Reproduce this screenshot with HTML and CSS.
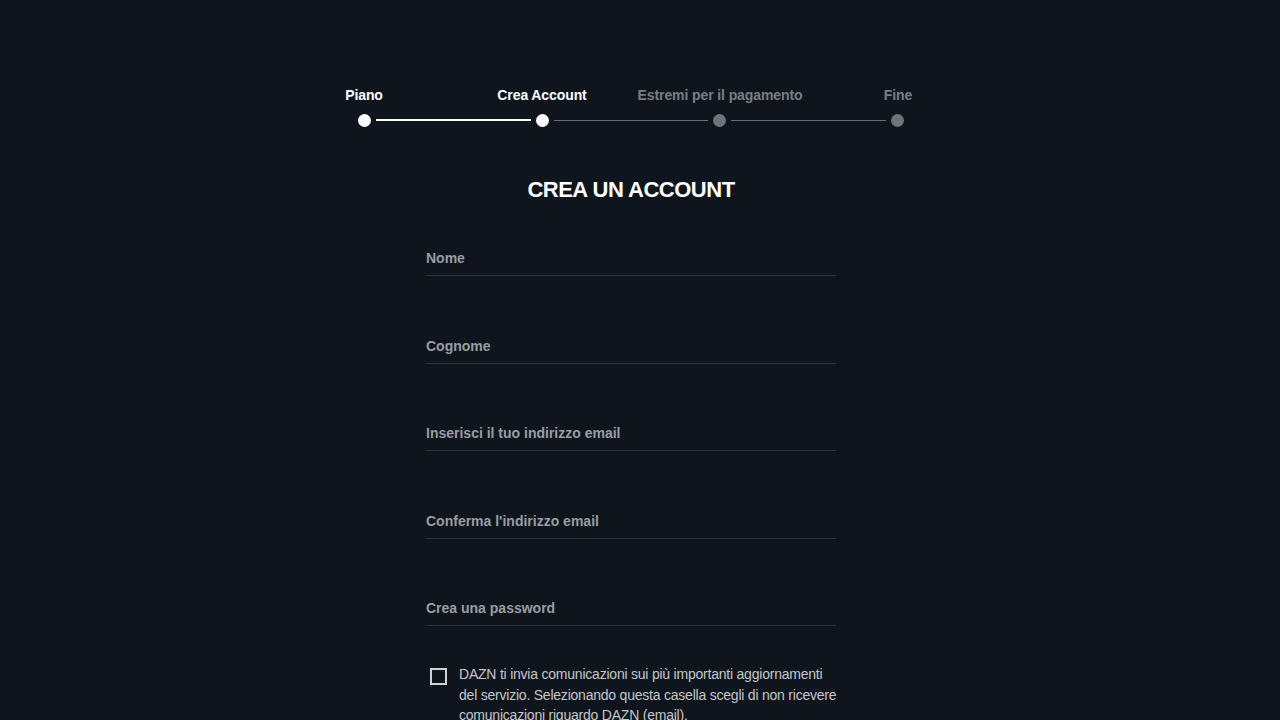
FILE: index.html
```html
<!DOCTYPE html>
<html lang="it">
<head>
<meta charset="utf-8">
<title>DAZN - Crea un account</title>
<link rel="stylesheet" href="styles.css">
</head>
<body>
<main class="page">
  <nav class="stepper">
    <ol class="step-labels">
      <li class="step-label is-done">Piano</li>
      <li class="step-label is-active">Crea Account</li>
      <li class="step-label">Estremi per il pagamento</li>
      <li class="step-label">Fine</li>
    </ol>
    <div class="step-track">
      <span class="dot dot-on"></span>
      <span class="line line-on"></span>
      <span class="dot dot-on"></span>
      <span class="line"></span>
      <span class="dot"></span>
      <span class="line"></span>
      <span class="dot"></span>
    </div>
  </nav>

  <h1 class="title">CREA UN ACCOUNT</h1>

  <form class="form">
    <label class="field"><span class="field-label">Nome</span></label>
    <label class="field"><span class="field-label">Cognome</span></label>
    <label class="field"><span class="field-label">Inserisci il tuo indirizzo email</span></label>
    <label class="field"><span class="field-label">Conferma l'indirizzo email</span></label>
    <label class="field"><span class="field-label">Crea una password</span></label>

    <label class="optout">
      <span class="checkbox"></span>
      <span class="optout-text">DAZN ti invia comunicazioni sui più importanti aggiornamenti del servizio. Selezionando questa casella scegli di non ricevere comunicazioni riguardo DAZN (email).</span>
    </label>
  </form>
</main>
</body>
</html>
```
FILE: styles.css
```css
html, body {
  margin: 0;
  padding: 0;
  background: #0e151c;
  height: 100%;
  overflow: hidden;
}
body {
  font-family: "Liberation Sans", Arial, sans-serif;
  color: #ffffff;
}
.page {
  width: 1262px;
  display: flex;
  flex-direction: column;
  align-items: center;
  padding-top: 86px;
}
.stepper {
  display: flex;
  flex-direction: column;
  align-items: center;
}
.step-labels {
  list-style: none;
  margin: 0;
  padding: 0;
  display: grid;
  grid-template-columns: repeat(4, 178px);
}
.step-label {
  text-align: center;
  white-space: nowrap;
  font-size: 14px;
  font-weight: bold;
  line-height: 18px;
  letter-spacing: -0.1px;
  color: #7a7f85;
}
.step-label.is-done,
.step-label.is-active {
  color: #ffffff;
}
.step-track {
  margin-top: 9.5px;
  width: 546px;
  display: flex;
  align-items: center;
}
.dot {
  width: 13px;
  height: 13px;
  border-radius: 50%;
  background: #6f747a;
  flex: none;
}
.dot-on {
  background: #ffffff;
}
.line {
  flex: 1;
  height: 1px;
  background: #6b7077;
  margin: 0 5px;
}
.line-on {
  height: 2px;
  background: #ffffff;
}
.title {
  margin: 49.5px 0 0;
  font-size: 22px;
  line-height: 28px;
  font-weight: bold;
  letter-spacing: -0.5px;
}
.form {
  width: 410px;
  margin-top: 45px;
  display: flex;
  flex-direction: column;
}
.field {
  display: block;
  height: 26px;
  border-bottom: 1px solid #2c333b;
  margin-bottom: 60.5px;
}
.field-label {
  display: block;
  font-size: 14px;
  font-weight: bold;
  line-height: 18px;
  color: #9a9ea3;
}
.optout {
  display: flex;
  gap: 12px;
  margin-top: -22.5px;
  margin-right: -8px;
  padding-left: 4px;
}
.checkbox {
  flex: none;
  width: 13px;
  height: 13px;
  border: 2px solid #d0d2d4;
  margin-top: 4px;
}
.optout-text {
  font-size: 14px;
  line-height: 20.5px;
  letter-spacing: -0.22px;
  color: #c5c8cb;
}
```
